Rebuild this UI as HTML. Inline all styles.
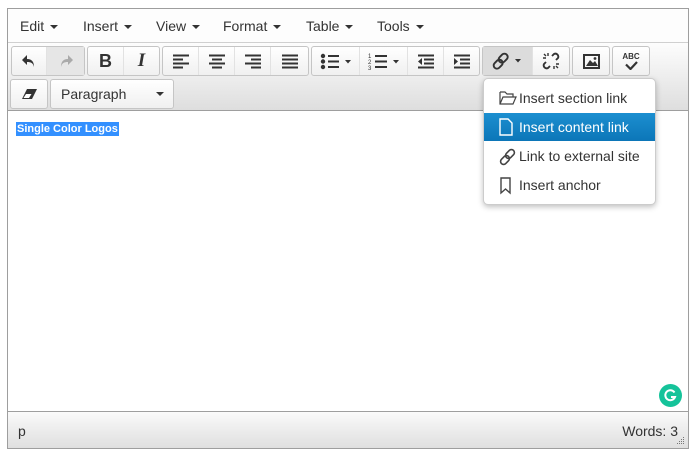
<!DOCTYPE html>
<html><head><meta charset="utf-8"><style>
*{box-sizing:border-box;margin:0;padding:0}
body{width:695px;height:457px;background:#fff;font-family:"Liberation Sans",Arial,sans-serif;position:relative;overflow:hidden;color:#333}
.a{position:absolute}
.outer{left:7px;top:8px;width:682px;height:441px;border:1px solid #9e9e9e}
.menu{left:8px;top:9px;width:680px;height:34px;background:#fdfdfd;border-bottom:1px solid #d0d0d0}
.mi{position:absolute;top:9px;font-size:14px;color:#333}
.car{display:inline-block;width:0;height:0;border-left:4px solid transparent;border-right:4px solid transparent;border-top:4px solid #333;vertical-align:middle;margin-left:6px}
.tb{left:8px;top:43px;width:680px;height:68px;background:linear-gradient(#fdfdfd,#dedede);border-bottom:1px solid #9e9e9e}
.grp{position:absolute;height:30px;border:1px solid #c5c5c5;border-radius:3px;background:linear-gradient(#fff,#f0f0f0);display:flex}
.btn{height:28px;display:flex;align-items:center;justify-content:center;border-right:1px solid #e2e2e2}
.btn:last-child{border-right:none}
.status{left:8px;top:411px;width:680px;height:37px;background:linear-gradient(#fafafa,#dfdfdf);border-top:1px solid #9e9e9e;font-size:14px;color:#333}
.dd{left:483px;top:78px;width:173px;height:127px;background:#fff;border:1px solid #ccc;border-radius:5px;box-shadow:0 2px 6px rgba(0,0,0,.25)}
.it{position:absolute;left:0;width:171px;height:28px;font-size:14px;color:#333;padding-left:35px;line-height:28px}
.it svg{position:absolute;left:15px;top:6px}
</style></head><body>
<div class="a outer"></div>
<div class="a menu">
<span class="mi" style="left:12px">Edit<span class="car"></span></span>
<span class="mi" style="left:75px">Insert<span class="car"></span></span>
<span class="mi" style="left:148px">View<span class="car"></span></span>
<span class="mi" style="left:215px">Format<span class="car"></span></span>
<span class="mi" style="left:298px">Table<span class="car"></span></span>
<span class="mi" style="left:369px">Tools<span class="car"></span></span>
</div>
<div class="a tb"></div>
<div class="grp" style="left:11px;top:46px;width:74px">
 <div class="btn" style="width:35px"><svg width="16" height="16" viewBox="0 0 16 16"><path d="M6 2L1 7l5 5V9c4 0 6 1 7 5 0-5-2-8-7-8z" fill="#333"/></svg></div>
 <div class="btn" style="width:37px;background:#e6e6e6"><svg width="16" height="16" viewBox="0 0 16 16"><path d="M10 2l5 5-5 5V9C6 9 4 10 3 14c0-5 2-8 7-8z" fill="#aaa"/></svg></div>
</div>
<div class="grp" style="left:87px;top:46px;width:73px">
 <div class="btn" style="width:36px;font-weight:bold;font-size:18px;color:#333">B</div>
 <div class="btn" style="width:35px;font-style:italic;font-weight:bold;font-size:19px;font-family:'Liberation Serif',serif;color:#333">I</div>
</div>
<div class="grp" style="left:162px;top:46px;width:147px">
 <div class="btn" style="width:36px"><svg width="18" height="15"><path d="M1 1.5h16M1 5.5h10M1 9.5h16M1 13.5h10" stroke="#333" stroke-width="2"/></svg></div>
 <div class="btn" style="width:36px"><svg width="18" height="15"><path d="M1 1.5h16M4 5.5h10M1 9.5h16M4 13.5h10" stroke="#333" stroke-width="2"/></svg></div>
 <div class="btn" style="width:36px"><svg width="18" height="15"><path d="M1 1.5h16M7 5.5h10M1 9.5h16M7 13.5h10" stroke="#333" stroke-width="2"/></svg></div>
 <div class="btn" style="width:37px"><svg width="18" height="15"><path d="M1 1.5h16M1 5.5h16M1 9.5h16M1 13.5h16" stroke="#333" stroke-width="2"/></svg></div>
</div>
<div class="grp" style="left:311px;top:46px;width:169px">
 <div class="btn" style="width:48px"><svg width="32" height="17"><circle cx="3" cy="3" r="2.2" fill="#333"/><circle cx="3" cy="8.5" r="2.2" fill="#333"/><circle cx="3" cy="14" r="2.2" fill="#333"/><path d="M8 3h11M8 8.5h11M8 14h11" stroke="#333" stroke-width="2"/><path d="M25 7h6l-3 3.5z" fill="#333"/></svg></div>
 <div class="btn" style="width:48px"><svg width="32" height="17"><text x="0" y="5" font-size="6" fill="#333">1</text><text x="0" y="11" font-size="6" fill="#333">2</text><text x="0" y="17" font-size="6" fill="#333">3</text><path d="M7 3h12M7 8.5h12M7 14h12" stroke="#333" stroke-width="2"/><path d="M25 7h6l-3 3.5z" fill="#333"/></svg></div>
 <div class="btn" style="width:36px"><svg width="18" height="15"><path d="M1 1.5h16M7 5.5h10M7 9.5h10M1 13.5h16" stroke="#333" stroke-width="2"/><path d="M5 4L1 7.5l4 3.5z" fill="#333"/></svg></div>
 <div class="btn" style="width:35px"><svg width="18" height="15"><path d="M1 1.5h16M7 5.5h10M7 9.5h10M1 13.5h16" stroke="#333" stroke-width="2"/><path d="M1 4l4 3.5-4 3.5z" fill="#333"/></svg></div>
</div>
<div class="grp" style="left:482px;top:46px;width:88px">
 <div class="btn" style="width:51px;background:#dcdcdc"><svg width="32" height="18"><g fill="none" stroke="#333" stroke-width="1.9"><rect x="8" y="1" width="6.5" height="10" rx="3.2" transform="rotate(45 11 6)"/><rect x="3" y="7" width="6.5" height="10" rx="3.2" transform="rotate(45 6 12)"/></g><path d="M23 7h6l-3 3.5z" fill="#333"/></svg></div>
 <div class="btn" style="width:36px"><svg width="18" height="18"><g fill="none" stroke="#333" stroke-width="1.9"><path d="M10 4l2-2a3 3 0 014 4l-2 2M8 14l-2 2a3 3 0 01-4-4l2-2"/></g><path d="M6 1v3M1 6h3M12 17v-3M17 12h-3M4 4L2 2M14 14l2 2" stroke="#333" stroke-width="1.4"/></svg></div>
</div>
<div class="grp" style="left:572px;top:46px;width:38px"><div class="btn" style="width:36px"><svg width="17" height="15"><rect x="1" y="1" width="15" height="13" fill="none" stroke="#333" stroke-width="2"/><path d="M3 12l4-6 3 3 2-2 3 5z" fill="#333"/><circle cx="12" cy="4.5" r="1.4" fill="#333"/></svg></div></div>
<div class="grp" style="left:612px;top:46px;width:38px"><div class="btn" style="width:36px;flex-direction:column"><span style="font-size:8px;font-weight:bold;line-height:8px;color:#333">ABC</span><svg width="13" height="9"><path d="M1 3.5l4.5 4.5 6.5-7" fill="none" stroke="#333" stroke-width="2.2"/></svg></div></div>
<div class="grp" style="left:10px;top:79px;width:38px"><div class="btn" style="width:36px"><svg width="17" height="12"><path d="M6 1h10l-5 10H1z" fill="#333"/><path d="M2.5 10l2.5-4h5.5L8 10z" fill="#fff"/></svg></div></div>
<div class="grp" style="left:50px;top:79px;width:124px"><div class="btn" style="width:122px;justify-content:space-between;padding:0 9px 0 10px;font-size:14px">Paragraph<span class="car" style="margin:0"></span></div></div>
<div class="a" style="left:16px;top:122px;background:#3390ff;color:#fff;font-size:11px;font-weight:bold;padding:0 1px;height:14px;line-height:14px">Single Color Logos</div>
<div class="a" style="left:659px;top:384px;width:23px;height:23px;border-radius:50%;background:#15c39a"><svg width="23" height="23"><path d="M15.5 8.5A5 5 0 1 0 16 13h-4" fill="none" stroke="#fff" stroke-width="2"/></svg></div>
<div class="a status"><span style="position:absolute;left:10px;top:11px">p</span><span style="position:absolute;right:10px;top:11px">Words: 3</span>
<svg style="position:absolute;right:3px;bottom:3px" width="8" height="8"><g fill="#777"><rect x="6" y="0" width="1" height="1"/><rect x="4" y="2" width="1" height="1"/><rect x="6" y="2" width="1" height="1"/><rect x="2" y="4" width="1" height="1"/><rect x="4" y="4" width="1" height="1"/><rect x="6" y="4" width="1" height="1"/><rect x="0" y="6" width="1" height="1"/><rect x="2" y="6" width="1" height="1"/><rect x="4" y="6" width="1" height="1"/><rect x="6" y="6" width="1" height="1"/></g></svg></div>
<div class="a dd">
<div class="it" style="top:5px"><svg width="18" height="16"><path d="M1 2h5l2 2h6v3M1 2v12h13l3-7H4L1 14" fill="none" stroke="#444" stroke-width="1.2"/></svg>Insert section link</div>
<div class="it" style="top:34px;background:linear-gradient(#1c8fd0,#0c76b8);color:#fff"><svg width="14" height="18" style="top:5px"><path d="M1 1h8l4 4v12H1z" fill="none" stroke="#fff" stroke-width="1.4"/></svg>Insert content link</div>
<div class="it" style="top:63px"><svg width="18" height="18"><g fill="none" stroke="#444" stroke-width="1.6"><rect x="8" y="1" width="6" height="10" rx="3" transform="rotate(45 11 6)"/><rect x="3" y="7" width="6" height="10" rx="3" transform="rotate(45 6 12)"/></g></svg>Link to external site</div>
<div class="it" style="top:92px"><svg width="14" height="18"><path d="M2 1h9v15l-4.5-4L2 16z" fill="none" stroke="#444" stroke-width="1.4"/></svg>Insert anchor</div>
</div>
</body></html>
